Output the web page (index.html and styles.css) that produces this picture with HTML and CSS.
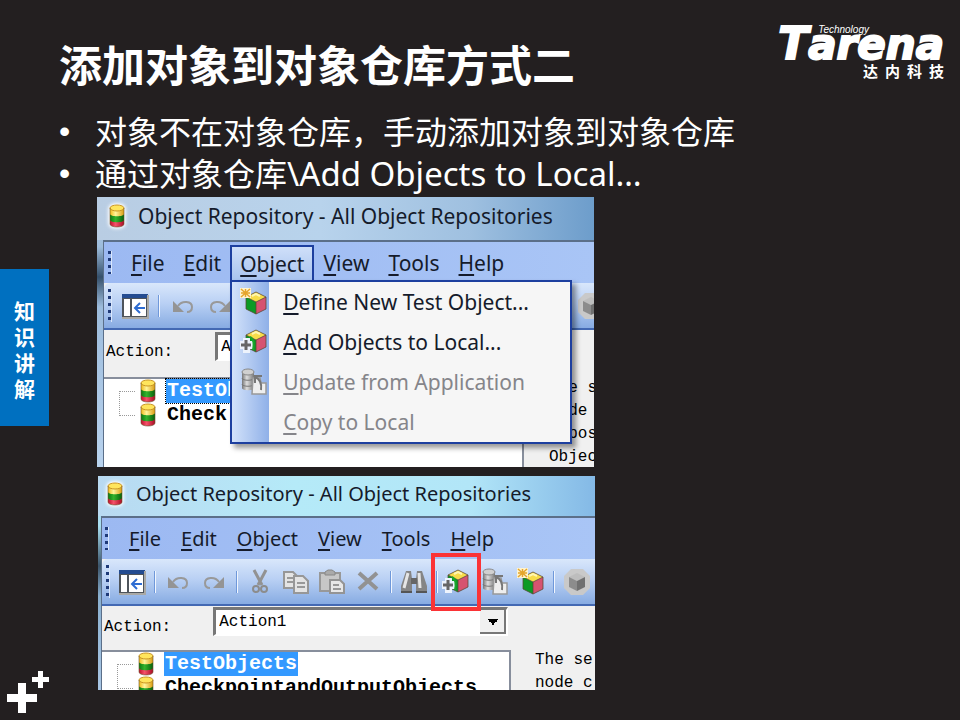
FILE: index.html
```html
<!DOCTYPE html>
<html lang="zh-CN">
<head>
<meta charset="utf-8">
<title>添加对象到对象仓库方式二</title>
<link rel="stylesheet" href="styles.css">
</head>
<body>
<svg class="defs" aria-hidden="true">
  <defs>
    <linearGradient id="yel"><stop offset="0" stop-color="#f0b818"/><stop offset=".4" stop-color="#fff59a"/><stop offset="1" stop-color="#d99b10"/></linearGradient>
    <linearGradient id="grn"><stop offset="0" stop-color="#0a7a12"/><stop offset=".4" stop-color="#35b32c"/><stop offset="1" stop-color="#07600c"/></linearGradient>
    <linearGradient id="red"><stop offset="0" stop-color="#c00f2c"/><stop offset=".4" stop-color="#f5526a"/><stop offset="1" stop-color="#a80c24"/></linearGradient>
    <linearGradient id="gry"><stop offset="0" stop-color="#777"/><stop offset=".4" stop-color="#ddd"/><stop offset="1" stop-color="#777"/></linearGradient>
    <symbol id="db" viewBox="0 0 16 24">
      <path d="M1 14v6c0 4 14 4 14 0v-6z" fill="url(#red)"/>
      <path d="M1 9v7c0 3 14 3 14 0V9z" fill="url(#grn)"/>
      <path d="M1 4v6c0 3 14 3 14 0V4z" fill="url(#yel)"/>
      <ellipse cx="8" cy="4" rx="7" ry="3" fill="#ffe55c" stroke="#c99524"/>
      <path d="M1 4v16c0 4 14 4 14 0V4" fill="none" stroke="#6d5330" stroke-opacity=".6"/>
    </symbol>
    <symbol id="cube" viewBox="0 0 22 24">
      <path d="M11 1l10 5-10 5L1 6z" fill="#f7dc4a"/>
      <path d="M1 6l10 5v12L1 18z" fill="#0b9a25"/>
      <path d="M21 6l-10 5v12l10-5z" fill="#d65370"/>
      <path d="M11 1l10 5v12l-10 5L1 18V6zM1 6l10 5 10-5M11 11v12" fill="none" stroke="#5a4632" stroke-opacity=".75"/>
      <path d="M7 5l4-2 4 2" fill="none" stroke="#fff6b0" stroke-width="2"/>
    </symbol>
    <symbol id="i-new" viewBox="0 0 28 28">
      <use href="#cube" x="5" y="3" width="22" height="24"/>
      <path d="M0 0h11v10H0z" fill="#fff4d0"/>
      <path d="M1 1l9 8M10 1L1 9M5.500 1v8M1 5h9" stroke="#e5a52c" stroke-width="1.500"/>
    </symbol>
    <symbol id="i-add" viewBox="0 0 28 28">
      <use href="#cube" x="5" y="1" width="22" height="24"/>
      <path d="M0 13h3v-3h7v3h3v8h-3v4H3v-4H0z" fill="#edf3fc"/>
      <path d="M6 12v10M1 17h10" stroke="#666" stroke-width="3"/>
      <path d="M10 9c4 2 4 8 3 13" fill="none" stroke="#19a52a" stroke-width="2"/>
    </symbol>
    <symbol id="i-update" viewBox="0 0 28 28">
      <path d="M2 4v16c0 3 12 3 12 0V4z" fill="url(#gry)"/>
      <ellipse cx="8" cy="4" rx="6" ry="3" fill="#d0d0d0" stroke="#888"/>
      <path d="M2 10c0 3 12 3 12 0M2 16c0 3 12 3 12 0" fill="none" stroke="#777"/>
      <path d="M13 10h7l1 5h5v11H12z" fill="#eee" stroke="#999" stroke-width="1.500"/>
      <path d="M21 22c1-7-1-11-6-13m0 6V8h7" fill="none" stroke="#777" stroke-width="2"/>
    </symbol>
    <symbol id="i-panel" viewBox="0 0 28 28">
      <path d="M1 2h26v24H1z" fill="#4e545b"/>
      <path d="M1 2h26v4H1z" fill="#244c91"/>
      <path d="M3 7h6v17H3zM11 7h14v17H11z" fill="#fff"/>
      <path d="M1 26h26V3" fill="none" stroke="#aaa9a5" stroke-width="2"/>
      <path d="M24 16H14m5-5l-5 5 5 5" fill="none" stroke="#2d6cd2" stroke-width="2"/>
    </symbol>
    <symbol id="i-undo" viewBox="0 0 28 28">
      <path d="M9 14c4-6 14-5 14 1 0 3-2 5-5 5" fill="none" stroke="#999" stroke-width="2"/>
      <path d="M4 9v11h11z" fill="#949494"/>
    </symbol>
    <symbol id="i-redo" viewBox="0 0 28 28">
      <path d="M19 14c-4-6-14-5-14 1 0 3 2 5 5 5" fill="none" stroke="#999" stroke-width="2"/>
      <path d="M24 9v11H13z" fill="#949494"/>
    </symbol>
    <symbol id="i-cut" viewBox="0 0 28 28">
      <path d="M8 2l8 15M20 2l-8 15" stroke="#929292" stroke-width="3"/>
      <circle cx="10" cy="21" r="3" fill="none" stroke="#8c8c8c" stroke-width="2"/>
      <circle cx="18" cy="21" r="3" fill="none" stroke="#8c8c8c" stroke-width="2"/>
    </symbol>
    <symbol id="i-copy" viewBox="0 0 28 28">
      <path d="M2 4h9l4 4v12H2z" fill="#e4e4e4" stroke="#979797" stroke-width="2"/>
      <path d="M5 10h6M5 14h6" stroke="#999" stroke-width="2"/>
      <path d="M12 8h9l5 5v12H12z" fill="#e4e4e4" stroke="#979797" stroke-width="2"/>
      <path d="M15 15h8M15 19h8" stroke="#999" stroke-width="2"/>
    </symbol>
    <symbol id="i-paste" viewBox="0 0 28 28">
      <path d="M2 5h20v18H2z" fill="#c7c7c7" stroke="#989898" stroke-width="2"/>
      <path d="M7 7V4l3-2h4l3 2v3z" fill="#aaa" stroke="#888"/>
      <path d="M12 12h10l4 4v9H12z" fill="#e8e8e8" stroke="#949494" stroke-width="2"/>
      <path d="M15 17h6M15 21h8" stroke="#999" stroke-width="2"/>
    </symbol>
    <symbol id="i-del" viewBox="0 0 28 28">
      <path d="M5 5l18 16M23 5L5 21" stroke="#929292" stroke-width="4"/>
    </symbol>
    <symbol id="i-find" viewBox="0 0 28 28">
      <path d="M6 3h5l1 8v14H1v-7zM22 3h-5l-1 8v14h11v-7z" fill="#858585"/>
      <path d="M11 10h6v6h-6z" fill="#666"/>
      <path d="M8 5L4 20M19 5l1 15" stroke="#e5e5e5" stroke-width="3"/>
      <path d="M1 24h11M16 24h11" stroke="#555" stroke-width="2"/>
    </symbol>
    <symbol id="i-gray" viewBox="0 0 28 28">
      <path d="M8 1h12l7 7v12l-7 7H8l-7-7V8z" fill="#c9c9c9"/>
      <path d="M14 5l8 4-8 4-8-4z" fill="#bdbdbd"/>
      <path d="M6 9l8 4v10l-8-4z" fill="#8c8c8c"/>
      <path d="M22 9l-8 4v10l8-4z" fill="#707070"/>
    </symbol>
  </defs>
</svg>

<div class="slide">
  <aside class="rail">
    <div class="tab">知识讲解</div>
    <svg class="plus" viewBox="0 0 49 49" aria-hidden="true">
      <path d="M18 12h8v11h11v8H26v11h-8V31H7v-8h11z" fill="#fff"/>
      <path d="M38 0h5v6h6v5h-6v6h-5v-6h-6V6h6z" fill="#fff"/>
    </svg>
  </aside>

  <main class="main">
    <header class="head">
      <h1>添加对象到对象仓库方式二</h1>
      <div class="logo">
        <span class="logo-tech">Technology</span>
        <span class="logo-name">Tarena</span>
        <span class="logo-cn"><span>达</span><span>内</span><span>科</span><span>技</span></span>
      </div>
    </header>

    <ul class="points">
      <li>对象不在对象仓库，手动添加对象到对象仓库</li>
      <li>通过对象仓库<span class="latin">\Add Objects to Local…</span></li>
    </ul>

    <div class="shots">
      <section class="win win-a">
        <div class="caption"><svg class="db"><use href="#db"/></svg>Object Repository - All Object Repositories</div>
        <div class="client">
          <nav class="menubar">
            <i class="grip"></i>
            <button><u>F</u>ile</button>
            <button><u>E</u>dit</button>
            <div class="open">
              <button><u>O</u>bject</button>
              <div class="dropdown">
                <button><svg><use href="#i-new"/></svg><span><u>D</u>efine New Test Object...</span></button>
                <button><svg><use href="#i-add"/></svg><span><u>A</u>dd Objects to Local...</span></button>
                <button disabled><svg><use href="#i-update"/></svg><span><u>U</u>pdate from Application</span></button>
                <button disabled><svg></svg><span><u>C</u>opy to Local</span></button>
              </div>
            </div>
            <button><u>V</u>iew</button>
            <button><u>T</u>ools</button>
            <button><u>H</u>elp</button>
          </nav>
          <div class="toolbar">
            <i class="grip"></i>
            <button aria-label="Panel"><svg><use href="#i-panel"/></svg></button>
            <i class="sep"></i>
            <button aria-label="Undo"><svg><use href="#i-undo"/></svg></button>
            <button aria-label="Redo"><svg><use href="#i-redo"/></svg></button>
            <button class="last" aria-label="Object"><svg><use href="#i-gray"/></svg></button>
          </div>
          <div class="panes">
            <div class="left">
              <div class="field"><label for="act-a">Action:</label><select id="act-a"><option>Action1</option></select></div>
              <ul class="tree">
                <li><svg class="db"><use href="#db"/></svg><span class="sel focus">TestObjects</span></li>
                <li><svg class="db"><use href="#db"/></svg><span>Check</span></li>
              </ul>
            </div>
            <p class="info">The se<br>node c<br>repos<br>Objec</p>
          </div>
        </div>
      </section>

      <section class="win win-b">
        <div class="caption"><svg class="db"><use href="#db"/></svg>Object Repository - All Object Repositories</div>
        <div class="client">
          <nav class="menubar">
            <i class="grip"></i>
            <button><u>F</u>ile</button>
            <button><u>E</u>dit</button>
            <button><u>O</u>bject</button>
            <button><u>V</u>iew</button>
            <button><u>T</u>ools</button>
            <button><u>H</u>elp</button>
          </nav>
          <div class="toolbar">
            <i class="grip"></i>
            <button aria-label="Panel"><svg><use href="#i-panel"/></svg></button>
            <i class="sep"></i>
            <button aria-label="Undo"><svg><use href="#i-undo"/></svg></button>
            <button aria-label="Redo"><svg><use href="#i-redo"/></svg></button>
            <i class="sep"></i>
            <button aria-label="Cut"><svg><use href="#i-cut"/></svg></button>
            <button aria-label="Copy"><svg><use href="#i-copy"/></svg></button>
            <button aria-label="Paste"><svg><use href="#i-paste"/></svg></button>
            <button aria-label="Delete"><svg><use href="#i-del"/></svg></button>
            <i class="sep"></i>
            <button aria-label="Find"><svg><use href="#i-find"/></svg></button>
            <i class="sep"></i>
            <button class="marked" aria-label="Add Objects to Local"><svg><use href="#i-add"/></svg></button>
            <button aria-label="Update from Application"><svg><use href="#i-update"/></svg></button>
            <button aria-label="Define New Test Object"><svg><use href="#i-new"/></svg></button>
            <i class="sep"></i>
            <button aria-label="Object"><svg><use href="#i-gray"/></svg></button>
          </div>
          <div class="panes">
            <div class="left">
              <div class="field"><label for="act-b">Action:</label><select id="act-b"><option>Action1</option></select></div>
              <ul class="tree">
                <li><svg class="db"><use href="#db"/></svg><span class="sel">TestObjects</span></li>
                <li><svg class="db"><use href="#db"/></svg><span>CheckpointandOutputObjects</span></li>
              </ul>
            </div>
            <p class="info">The se<br>node c</p>
          </div>
        </div>
      </section>
    </div>
  </main>
</div>
</body>
</html>
```
FILE: styles.css
```css
* { box-sizing: border-box; }
body { margin: 0; background: #231f20; color: #fff; font-family: "Noto Sans", "Noto Sans CJK SC", sans-serif; }
ul, p, h1 { margin: 0; padding: 0; }
ul { list-style: none; }
button { margin: 0; padding: 0; border: 0; background: none; color: inherit; font: inherit; }
svg { display: block; flex: none; }
.defs { position: absolute; width: 0; height: 0; }

.slide { display: grid; grid-template-columns: 49px minmax(0, 1fr); min-height: 100vh; }
.rail { display: flex; flex-direction: column; justify-content: space-between; padding-top: 269px; }
.tab { padding: 28px 14px 25px; background: #0070c0; font: bold 21px/26px "Noto Sans CJK SC", sans-serif; word-break: break-all; }
.plus { width: 49px; height: 49px; }

.main { padding-left: 10px; }
.head { display: flex; justify-content: space-between; align-items: flex-start; height: 111px; padding-right: 16px; }
h1 { padding-top: 31px; font: bold 43px/64px "Noto Sans CJK SC", sans-serif; }
.logo { position: relative; display: flex; flex-direction: column; align-items: flex-end; padding-top: 24px; }
.logo-name { height: 38px; font: italic bold 42px/40px "DejaVu Sans", sans-serif; -webkit-text-stroke: 2px #fff; }
.logo-name::first-letter { font-size: 44px; }
.logo-tech { position: absolute; left: 40px; top: 24px; font: italic 10px/11px "Liberation Sans", sans-serif; }
.logo-cn { display: flex; gap: 7px; font: bold 15px/18px "Noto Sans CJK SC", sans-serif; }

.points { font-size: 32px; line-height: 41px; }
.points li { display: flex; height: 42px; }
.points li::before { content: "•"; width: 36px; font-family: "Liberation Sans", sans-serif; }
.latin { font-size: 33px; }

.shots { display: flex; flex-direction: column; gap: 9px; padding: 2px 0 30px 38px; }
.win { display: flex; flex-direction: column; max-width: 497px; overflow: hidden; color: #151b2b; }
.win-a { aspect-ratio: 497 / 270; padding-left: 6px; background: linear-gradient(#b4cae2, #9dbcdc 50px, #35506b 80px, #9dbcdc 110px, #b9d3ee); font-size: 21px; }
.win-b { aspect-ratio: 497 / 214; margin-left: 1px; padding-left: 3px; background: linear-gradient(#b5daf3, #a8def0 50px, #3c556b 90px, #8ab0d0 120px, #a9c6e4); font-size: 20px; }
.caption { display: flex; align-items: center; gap: 13px; flex: none; height: 43px; margin-left: -6px; padding: 0 0 5px 12px; background: linear-gradient(90deg, #b9cde3, #b8d3ec 45%, #9fc0e0 75%, #6d9dcb); font-size: 21px; white-space: nowrap; }
.win-b .caption { height: 40px; background: linear-gradient(90deg, #b9d9f1, #b5eaf8 40%, #b2e6f8 75%, #84b9e6); font-size: 20px; }
.db { width: 16px; height: 24px; }
.caption .db { filter: drop-shadow(0 0 2px #fff) drop-shadow(0 0 1px #fff); }
.client { flex: 1; display: flex; flex-direction: column; min-height: 0; border: solid #5b6f89; border-width: 2px 0 0 1px; background: #f0f0f0; }

.menubar { display: flex; align-items: stretch; gap: 19px; flex: none; height: 41px; padding: 3px 0 3px 4px; background: linear-gradient(90deg, #9cb9f2, #a9c5f6); white-space: nowrap; }
.win-b .menubar { gap: 20px; padding-left: 3px; }
.menubar u { text-underline-offset: 3px; text-decoration-thickness: 2px; }
.grip { flex: none; width: 4px; margin: 6px 0; background: repeating-linear-gradient(#1f3a78 0 3px, transparent 3px 7px); border-right: 1px solid #d9e6fb; }
.open { position: relative; display: flex; margin: 0 -10px; padding: 0 8px; border: solid #1d3f9f; border-width: 2px 2px 0; background: linear-gradient(#cfdff9, #a9c4ef); }
.dropdown { position: absolute; z-index: 2; left: -2px; top: 33px; width: 342px; border: 2px solid #1d3f9f; background: linear-gradient(90deg, #d3e2fa, #8fb0e8 37px, #f6f6f6 37px); box-shadow: 4px 4px 5px #0006; }
.dropdown button { display: flex; align-items: center; gap: 15px; width: 100%; height: 40px; padding-left: 8px; text-align: left; }
.dropdown button:disabled { color: #85858a; }
.dropdown svg, .toolbar svg { width: 28px; height: 28px; }

.toolbar { display: flex; align-items: center; gap: 8px; flex: none; height: 47px; padding: 0 7px 0 4px; border-bottom: 2px solid #4369b3; border-radius: 6px 0 0; background: linear-gradient(#d9e7fb, #b9d0f4 45%, #87abe2); }
.win-a .toolbar { gap: 9px; }
.toolbar button { flex: none; }
.toolbar .grip { align-self: stretch; }
.sep { flex: none; width: 2px; height: 22px; background: #6f98da; border-right: 1px solid #f1f6fe; }
.toolbar .last { margin: 0 -18px 0 auto; }
.marked { margin: -6px -8px -6px -15px; padding: 11px 7px; border: 4px solid #fb3336; position: relative; z-index: 1; }

.panes { flex: 1; display: flex; min-height: 0; }
.left { flex: 1; display: flex; flex-direction: column; min-width: 0; }
.field { display: flex; gap: 42px; flex: none; height: 47px; padding: 2px 3px 0 2px; font: 16px/40px "Liberation Mono", monospace; color: #000; }
.win-b .field { height: 44px; padding-top: 1px; }
select { flex: 1; height: 29px; padding: 0 3px; appearance: none; border: solid; border-width: 3px 2px 2px 3px; border-color: #777 #fff #fff #777; border-radius: 0; background: linear-gradient(45deg, transparent 50%, #000 50%) right 13px top 9px / 6px 6px no-repeat, linear-gradient(-45deg, transparent 50%, #000 50%) right 7px top 9px / 6px 6px no-repeat, linear-gradient(#777, #777) right / 2px 100% no-repeat, linear-gradient(#777, #777) right bottom / 26px 2px no-repeat, linear-gradient(#f0f0f0, #f0f0f0) right / 26px 100% no-repeat, #fff; color: #000; font: 16px/20px "Liberation Mono", monospace; }
.tree { flex: 1; padding-left: 15px; border: solid #878e9c; border-width: 2px 2px 0 0; background: #fff; color: #000; font: bold 20px/24px "Liberation Mono", monospace; }
.tree li { display: flex; align-items: center; height: 24px; }
.tree li::before { content: ""; flex: none; width: 15px; height: 12px; margin: 12px 5px 0 0; border: dotted #999; border-width: 1px 0 0 1px; }
.tree li + li::before { margin: 0 5px 12px 0; border-width: 0 0 1px 1px; }
.tree li > span { margin-left: 10px; padding: 0 1px; }
.sel { background: #3399ff; color: #fff; }
.focus { outline: 1px dotted #000; }
.info { flex: none; width: 70px; padding: 47px 0 0 25px; overflow: hidden; color: #000; font: 16px/23px "Liberation Mono", monospace; white-space: nowrap; }
.win-b .info { width: 84px; padding: 43px 0 0 24px; }
```
